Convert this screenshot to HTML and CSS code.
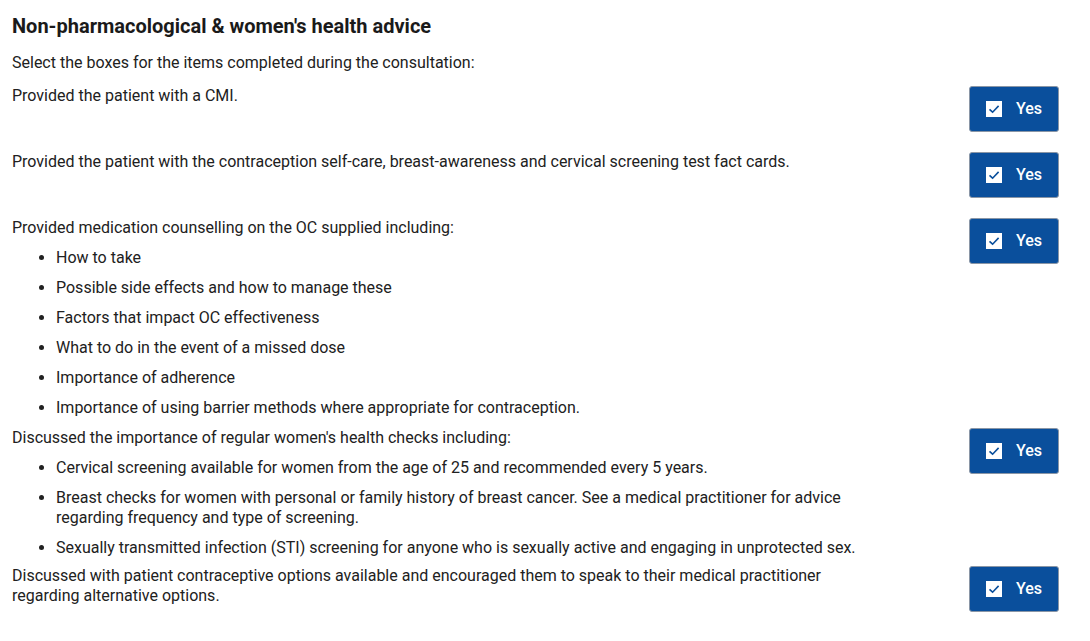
FILE: index.html
```html
<!DOCTYPE html>
<html lang="en">
<head>
<meta charset="utf-8">
<title>Non-pharmacological &amp; women's health advice</title>
<link rel="stylesheet" href="styles.css">
</head>
<body>
<div class="page">
  <h2 class="title">Non-pharmacological &amp; women's health advice</h2>
  <p class="intro">Select the boxes for the items completed during the consultation:</p>

  <div class="row">
    <div class="text"><p>Provided the patient with a CMI.</p></div>
    <div class="btn-wrap"><button class="yes"><span class="box"><svg viewBox="0 0 16 16" width="16" height="16"><path d="M3.5 8.3 L6.6 11.2 L12.6 4.9" fill="none" stroke="#0a4f9c" stroke-width="1.6"/></svg></span><span class="lbl">Yes</span></button></div>
  </div>

  <div class="row">
    <div class="text"><p>Provided the patient with the contraception self-care, breast-awareness and cervical screening test fact cards.</p></div>
    <div class="btn-wrap"><button class="yes"><span class="box"><svg viewBox="0 0 16 16" width="16" height="16"><path d="M3.5 8.3 L6.6 11.2 L12.6 4.9" fill="none" stroke="#0a4f9c" stroke-width="1.6"/></svg></span><span class="lbl">Yes</span></button></div>
  </div>

  <div class="row">
    <div class="text">
      <p>Provided medication counselling on the OC supplied including:</p>
      <ul>
        <li>How to take</li>
        <li>Possible side effects and how to manage these</li>
        <li>Factors that impact OC effectiveness</li>
        <li>What to do in the event of a missed dose</li>
        <li>Importance of adherence</li>
        <li>Importance of using barrier methods where appropriate for contraception.</li>
      </ul>
    </div>
    <div class="btn-wrap"><button class="yes"><span class="box"><svg viewBox="0 0 16 16" width="16" height="16"><path d="M3.5 8.3 L6.6 11.2 L12.6 4.9" fill="none" stroke="#0a4f9c" stroke-width="1.6"/></svg></span><span class="lbl">Yes</span></button></div>
  </div>

  <div class="row">
    <div class="text">
      <p>Discussed the importance of regular women's health checks including:</p>
      <ul class="tight">
        <li>Cervical screening available for women from the age of 25 and recommended every 5 years.</li>
        <li>Breast checks for women with personal or family history of breast cancer. See a medical practitioner for advice regarding frequency and type of screening.</li>
        <li>Sexually transmitted infection (STI) screening for anyone who is sexually active and engaging in unprotected sex.</li>
      </ul>
    </div>
    <div class="btn-wrap"><button class="yes"><span class="box"><svg viewBox="0 0 16 16" width="16" height="16"><path d="M3.5 8.3 L6.6 11.2 L12.6 4.9" fill="none" stroke="#0a4f9c" stroke-width="1.6"/></svg></span><span class="lbl">Yes</span></button></div>
  </div>

  <div class="row">
    <div class="text"><p>Discussed with patient contraceptive options available and encouraged them to speak to their medical practitioner regarding alternative options.</p></div>
    <div class="btn-wrap"><button class="yes"><span class="box"><svg viewBox="0 0 16 16" width="16" height="16"><path d="M3.5 8.3 L6.6 11.2 L12.6 4.9" fill="none" stroke="#0a4f9c" stroke-width="1.6"/></svg></span><span class="lbl">Yes</span></button></div>
  </div>
</div>
</body>
</html>
```
FILE: styles.css
```css
html, body {
  margin: 0;
  padding: 0;
  background: #ffffff;
}
body {
  font-family: Roboto, "Liberation Sans", Arial, sans-serif;
  color: #212121;
  font-size: 16px;
  line-height: 20px;
}
.page {
  padding: 13px 31px 0 12px;
}
.title {
  margin: 0 0 14px;
  font-size: 20px;
  line-height: 26px;
  font-weight: 700;
  color: #1a1a1a;
}
.intro {
  margin: 0 0 13px;
}
.row {
  display: flex;
  justify-content: space-between;
  align-items: flex-start;
}
.text {
  width: 860px;
}
.text p {
  margin: 0;
}
.text ul {
  margin: 0 0 10px;
  padding-left: 44px;
}
.text ul.tight {
  margin-bottom: 8px;
}
.text li {
  margin-top: 10px;
}
.btn-wrap {
  padding-top: 0;
  margin-bottom: 20px;
}
.yes {
  display: flex;
  align-items: center;
  width: 90px;
  height: 46px;
  padding: 0 0 0 16px;
  box-sizing: border-box;
  background: #0a4f9c;
  border: 1px solid #8a96a6;
  border-radius: 3px;
  color: #ffffff;
  font-family: Roboto, "Liberation Sans", Arial, sans-serif;
  font-size: 16px;
  font-weight: 500;
  cursor: pointer;
}
.box {
  display: block;
  width: 16px;
  height: 16px;
  background: #ffffff;
  margin-right: 14px;
}
.box svg {
  display: block;
}
.lbl {
  line-height: 20px;
}
```
